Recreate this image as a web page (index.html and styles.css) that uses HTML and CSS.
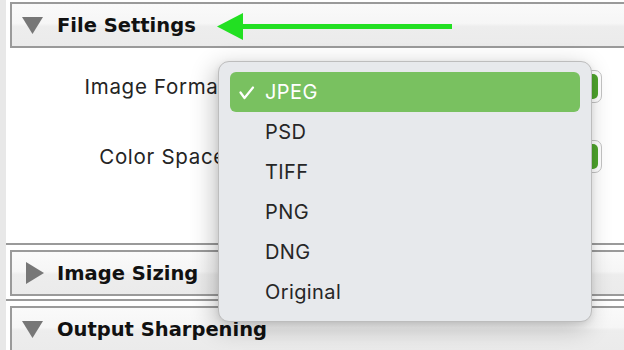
FILE: index.html
```html
<!DOCTYPE html>
<html>
<head>
<meta charset="utf-8">
<link rel="stylesheet" href="styles.css">
</head>
<body>
<div class="app">
  <div class="strip"></div>
  <div class="panel">
    <section class="section first">
      <div class="hdr">
        <span class="tri tri-down"><svg width="21" height="17" viewBox="0 0 21 17"><polygon points="0,0 21,0 10.5,17" fill="#777"/></svg></span>
        <span class="hdr-title">File Settings</span>
      </div>
      <div class="content">
        <div class="row">
          <span class="label">Image Format</span>
          <div class="popbtn"><span class="popcap"></span></div>
        </div>
        <div class="row">
          <span class="label">Color Space</span>
          <div class="popbtn"><span class="popcap"></span></div>
        </div>
      </div>
    </section>
    <section class="section">
      <div class="hdr">
        <span class="tri tri-right"><svg width="18" height="22" viewBox="0 0 18 22"><polygon points="0,0 18,11 0,22" fill="#777"/></svg></span>
        <span class="hdr-title">Image Sizing</span>
      </div>
    </section>
    <section class="section">
      <div class="hdr">
        <span class="tri tri-down"><svg width="21" height="17" viewBox="0 0 21 17"><polygon points="0,0 21,0 10.5,17" fill="#777"/></svg></span>
        <span class="hdr-title">Output Sharpening</span>
      </div>
    </section>
  </div>

  <svg class="arrow" width="238" height="30" viewBox="0 0 238 30">
    <polygon points="1,14.5 27,1 27,28" fill="#22e022"/>
    <rect x="25" y="12" width="211" height="5" fill="#22e022"/>
  </svg>

  <div class="menu">
    <div class="item selected"><svg class="check" width="16" height="14" viewBox="0 0 16 14"><polyline points="1.5,6.5 5.5,12 14,1.5" fill="none" stroke="#fff" stroke-width="2.2" stroke-linecap="round" stroke-linejoin="round"/></svg><span>JPEG</span></div>
    <div class="item"><span>PSD</span></div>
    <div class="item"><span>TIFF</span></div>
    <div class="item"><span>PNG</span></div>
    <div class="item"><span>DNG</span></div>
    <div class="item"><span>Original</span></div>
  </div>
</div>
</body>
</html>
```
FILE: styles.css
```css
html, body {
  margin: 0;
  padding: 0;
}
body {
  width: 624px;
  height: 350px;
  overflow: hidden;
  background: #fff;
  font-family: Inter, "Noto Sans", sans-serif;
}
.app {
  position: relative;
  display: flex;
  width: 624px;
  height: 350px;
  overflow: hidden;
}
.strip {
  flex: 0 0 6px;
  background: #e8e8e8;
}
.panel {
  flex: 1;
  min-width: 0;
  background: #fff;
}
.section {
  padding: 5px 0 3px 0;
  border-bottom: 2px solid #9a9a9a;
}
.section.first {
  padding-top: 2px;
}
.hdr {
  display: flex;
  align-items: center;
  height: 42px;
  margin-left: 4px;
  margin-right: -10px;
  border: 2px solid #9a9a9a;
  background: linear-gradient(to bottom, #fafafa 0%, #f6f6f6 46%, #ededed 54%, #ebebeb 100%);
}
.tri {
  display: flex;
  align-items: center;
  width: 45px;
  flex: 0 0 45px;
  box-sizing: border-box;
}
.tri-down { padding-left: 10px; }
.tri-right { padding-left: 14px; }
.hdr-title {
  font-family: "DejaVu Sans", sans-serif;
  font-weight: bold;
  font-size: 19.5px;
  color: #111;
}
.content {
  height: 170px;
  padding-top: 22px;
}
.row {
  display: flex;
  align-items: center;
  height: 33px;
}
.row + .row {
  margin-top: 37px;
}
.label {
  flex: 0 0 220px;
  text-align: right;
  font-size: 20.5px;
  color: #242424;
  letter-spacing: 0.7px;
}
.popbtn {
  margin-left: 6px;
  width: 370px;
  height: 33px;
  box-sizing: border-box;
  border: 1px solid #c4c4c4;
  border-radius: 7px;
  background: #fff;
  padding: 3px;
  display: flex;
  justify-content: flex-end;
}
.popcap {
  width: 22px;
  border-radius: 5px;
  background: #4fa52d;
}
.arrow {
  position: absolute;
  left: 216px;
  top: 12px;
}
.menu {
  position: absolute;
  left: 218px;
  top: 61px;
  width: 374px;
  height: 261px;
  box-sizing: border-box;
  padding: 10px 11px 9px 11px;
  border: 1px solid #bdbdbd;
  border-radius: 11px;
  background: #e7e9ec;
  box-shadow: -4px 6px 24px rgba(0, 0, 0, 0.24), 0 2px 6px rgba(0, 0, 0, 0.08);
}
.item {
  position: relative;
  display: flex;
  align-items: center;
  height: 40px;
  padding-left: 35px;
  border-radius: 6px;
  font-size: 20px;
  color: #262626;
  letter-spacing: 0.4px;
}
.item.selected {
  background: #79c160;
  color: #fff;
}
.check {
  position: absolute;
  left: 9px;
  top: 14px;
}
```
